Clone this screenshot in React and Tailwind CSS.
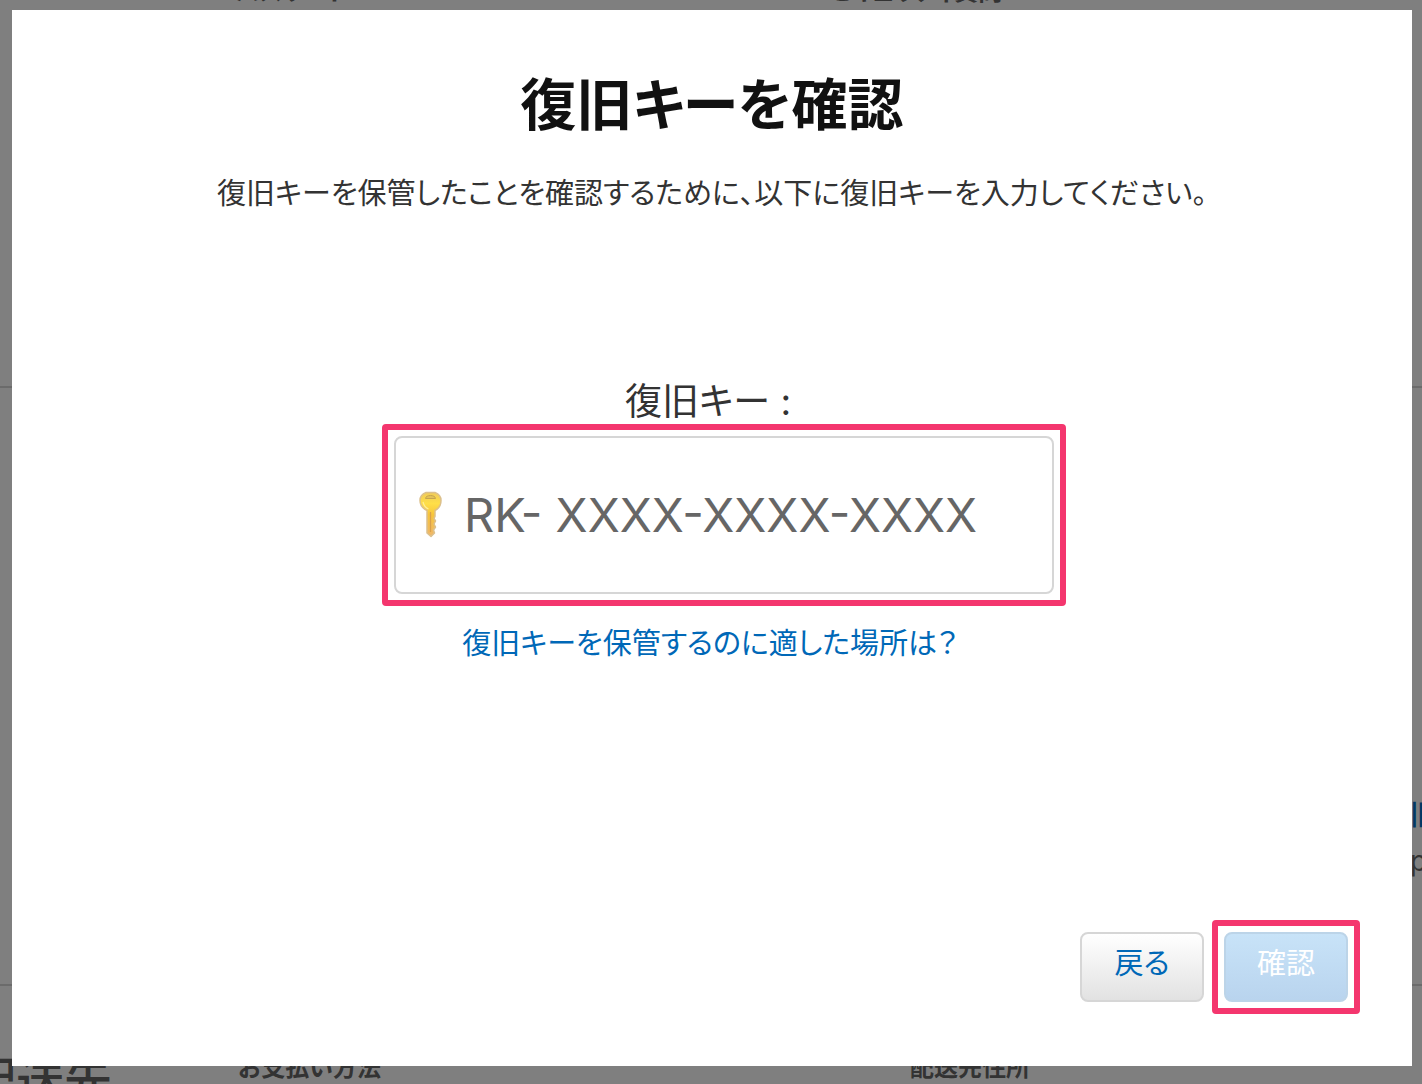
import { useState } from "react";

function KeyIcon() {
  return (
    <svg className="h-12 w-7 shrink-0" viewBox="0 0 28 48" aria-hidden="true">
      <defs>
        <linearGradient id="key-gold" x1="0" y1="0" x2="0" y2="1">
          <stop offset="0" stopColor="#f0cb58" />
          <stop offset="0.25" stopColor="#ffdf48" />
          <stop offset="0.5" stopColor="#f7c53c" />
          <stop offset="1" stopColor="#efb76c" />
        </linearGradient>
      </defs>
      <path
        d="M10 1.500h9c4 1.500 6 4.500 6 8c0 5-2 8-6 10v6l-1 2l1.500 2.500l-1.500 3l1.500 3l-2 3l1 3l-3.500 3.500l-4-3.500V19.500C7 17.500 4 14.500 4 9.500c0-3.500 2-6.500 6-8z"
        fill="url(#key-gold)"
        stroke="#dcc08c"
        strokeWidth="1.500"
        strokeLinejoin="round"
      />
      <path d="M9.500 7.500c0-4 10-4 10 0z" fill="#e3c258" stroke="#c7a44e" strokeWidth="1" />
      <path d="M14.500 21v20" stroke="#d9a04c" strokeWidth="1.300" />
      <path d="M7 11c1 4 3 6 5.500 7" fill="none" stroke="#ffee96" strokeWidth="1.200" />
    </svg>
  );
}

// Account page that stays visible around the dialog
function AccountPage() {
  return (
    <div className="-mt-6 text-2xl leading-8 text-[#666]" aria-hidden="true">
      <section className="flex h-[412px] border-b-2 border-[#d6d6d6] pl-[236px] font-bold">
        <h3 className="w-[592px]">パスワード</h3>
        <h3>セキュリティ質問</h3>
      </section>
      <section className="flex h-[598px] justify-end border-b-2 border-[#d6d6d6] pt-[404px]">
        <div className="w-3 whitespace-nowrap text-[28px] leading-[46px]">
          <p className="font-medium text-[#0070c9]">旧キー</p>
          <p>pple</p>
        </div>
      </section>
      <section className="flex pt-[66px] font-bold">
        <div className="flex w-[112px] shrink-0 justify-end pt-1">
          <h2 className="whitespace-nowrap text-5xl font-medium">お支払いと配送先</h2>
        </div>
        <h3 className="ml-[126px] w-[672px]">お支払い方法</h3>
        <h3>配送先住所</h3>
      </section>
    </div>
  );
}

function Highlight({ className, children }) {
  return <div className={`rounded-sm border-[6px] border-[#f4366e] p-[6px] ${className || ""}`}>{children}</div>;
}

function RecoveryKeyDialog() {
  const [key, setKey] = useState("");

  return (
    <form
      className="flex h-full flex-col items-center bg-white pt-14 text-[#333]"
      role="dialog"
      aria-labelledby="dialog-title"
      onSubmit={(e) => e.preventDefault()}
    >
      <h1 id="dialog-title" className="text-[56px] leading-[78px] font-bold text-[#111]">
        復旧キーを確認
      </h1>
      <p className="mt-[30px] text-[29px] leading-10 [font-kerning:none]">
        復旧キーを保管したことを確認するために、以下に復旧キーを入力してください。
      </p>

      <label htmlFor="recovery-key" className="mt-[168px] mb-[2px] mr-2 text-[37px] leading-10">
        復旧キー :
      </label>
      <Highlight className="ml-6 w-[684px]">
        <div className="flex h-[158px] items-center gap-5 rounded-lg border-2 border-[#d6d6d6] px-5">
          <KeyIcon />
          <input
            id="recovery-key"
            type="text"
            className="min-w-0 flex-1 bg-transparent font-['Inter'] text-[47px] font-normal outline-none placeholder:text-[#666]"
            placeholder="RK- XXXX-XXXX-XXXX"
            value={key}
            onChange={(e) => setKey(e.target.value)}
          />
        </div>
      </Highlight>
      <a href="#help" className="mt-[18px] mr-1 text-[29px] leading-10 text-[#0068b7] [font-kerning:none]">
        復旧キーを保管するのに適した場所は？
      </a>

      <div className="mt-auto flex items-center gap-2 self-end pr-[52px] pb-[52px] text-[29px]">
        <button
          type="button"
          className="h-[70px] w-[124px] rounded-lg border-2 border-[#d6d6d6] bg-linear-to-b from-white to-[#e2e2e2] pb-1.5 text-[#0068b7]"
        >
          戻る
        </button>
        <Highlight>
          <button
            type="submit"
            className="h-[70px] w-[124px] rounded-lg border-2 border-[#bcd4e8] bg-linear-to-b from-[#c8e3f8] to-[#b9d4ee] pb-1.5 text-white"
          >
            確認
          </button>
        </Highlight>
      </div>
    </form>
  );
}

export default function App() {
  return (
    <div className="relative h-screen overflow-hidden bg-white font-['Inter','Noto_Sans_CJK_JP',sans-serif] [font-feature-settings:'palt']">
      <AccountPage />
      <div className="absolute inset-0 bg-black/50 pt-[10px] pr-[10px] pb-[18px] pl-3">
        <RecoveryKeyDialog />
      </div>
    </div>
  );
}
